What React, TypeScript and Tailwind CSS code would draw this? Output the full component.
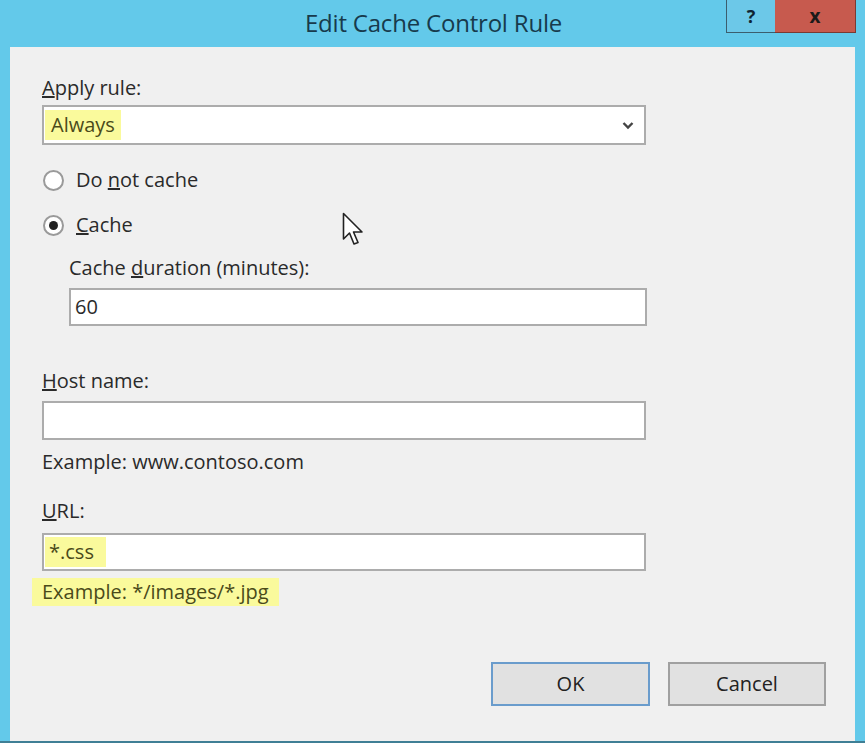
import React from 'react';

const font = { fontFamily: '"Open Sans", "Noto Sans", sans-serif' };

const Field: React.FC<{ children?: React.ReactNode; className?: string }> = ({ children, className }) => (
  <div className={`flex items-center bg-white border-2 border-[#acacac] ${className ?? ''}`}>{children}</div>
);

const Radio: React.FC<{ checked?: boolean; children: React.ReactNode }> = ({ checked, children }) => (
  <div className="flex items-center h-[30px] ml-[1px]">
    <span className="w-[21px] h-[21px] rounded-full bg-white border-2 border-[#9a9a9a] flex items-center justify-center">
      {checked && <span className="w-[9px] h-[9px] rounded-full bg-[#222]" />}
    </span>
    <span className="ml-[12px] text-[20px] text-[#2a2a2a]">{children}</span>
  </div>
);

export default function App() {
  return (
    <div className="w-[865px] h-[743px] bg-[#63c9ea] flex flex-col relative overflow-hidden border-b-2 border-[#3f7f95]" style={font}>
      {/* Title bar */}
      <div className="h-[47px] relative flex items-center justify-center flex-shrink-0">
        <span className="text-[24px] text-[#173a4c] -mt-[2px] ml-[2px] tracking-[-0.2px]">Edit Cache Control Rule</span>
        <div className="absolute top-0 right-[9px] flex h-[33px]">
          <div className="w-[49px] bg-[#6cc8e8] border-l border-b border-[#3b5e6e] flex items-center justify-center text-[18px] font-bold text-[#0f2433]">?</div>
          <div className="w-[81px] bg-[#c75a4e] border-b border-r border-[#7a3a33] flex items-center justify-center text-[19px] font-bold text-[#1a1a1a]">x</div>
        </div>
      </div>

      {/* Client area */}
      <div className="flex-1 mx-[10px] bg-[#f0f0f0] flex flex-col pl-[32px] pr-[29px] pt-[29px] text-[#2a2a2a]">
        <div className="h-[24px] leading-[24px] text-[20px]"><u>A</u>pply rule:</div>
        <Field className="mt-[5px] h-[40px] w-[604px] pl-[1px] pr-[10px]">
          <span className="h-[30px] leading-[30px] bg-[#fafa9c] px-[6px] text-[20px] text-[#4a4a1a]">Always</span>
          <svg className="ml-auto" width="12" height="9" viewBox="0 0 12 9">
            <path d="M1.5 2 L6 6.5 L10.5 2" fill="none" stroke="#444" strokeWidth="2.4" />
          </svg>
        </Field>

        <div className="mt-[20px]"><Radio>Do <u>n</u>ot cache</Radio></div>
        <div className="mt-[15px]"><Radio checked><u>C</u>ache</Radio></div>

        <div className="pl-[27px] mt-[16px]">
          <div className="h-[24px] leading-[24px] text-[20px]">Cache <u>d</u>uration (minutes):</div>
          <Field className="mt-[8px] h-[38px] w-[578px] pl-[4px] text-[20px]">60</Field>
        </div>

        <div className="mt-[43px] h-[24px] leading-[24px] text-[20px]"><u>H</u>ost name:</div>
        <Field className="mt-[8px] h-[39px] w-[604px]" />
        <div className="mt-[10px] h-[24px] leading-[24px] text-[20px]">Example: www.contoso.com</div>

        <div className="mt-[25px] h-[24px] leading-[24px] text-[20px]"><u>U</u>RL:</div>
        <Field className="mt-[10px] h-[38px] w-[604px] pl-[1px]">
          <span className="h-[30px] leading-[30px] bg-[#fafa9c] pl-[4px] pr-[12px] text-[20px] text-[#4a4a1a]">*.css</span>
        </Field>
        <div className="mt-[7px] -ml-[10px] self-start h-[28px] leading-[28px] px-[10px] bg-[#fafa9c] text-[20px] text-[#4a4a1a]">Example: */images/*.jpg</div>

        <div className="flex justify-end gap-[18px] mt-[56px]">
          <button className="w-[159px] h-[44px] bg-[#e1e1e1] border-2 border-[#6a9ccc] text-[20px] text-[#222]">OK</button>
          <button className="w-[158px] h-[44px] bg-[#e1e1e1] border-2 border-[#a0a0a0] text-[20px] text-[#222]">Cancel</button>
        </div>
      </div>

      {/* Mouse pointer */}
      <svg className="absolute left-[342px] top-[212px]" width="24" height="36" viewBox="0 0 24 36">
        <path d="M1.5 1.5 L1.5 27 L7.5 21 L12 32 L16 30.5 L11.5 20 L20 20 Z" fill="#fff" stroke="#222" strokeWidth="1.6" strokeLinejoin="round" />
      </svg>
    </div>
  );
}
